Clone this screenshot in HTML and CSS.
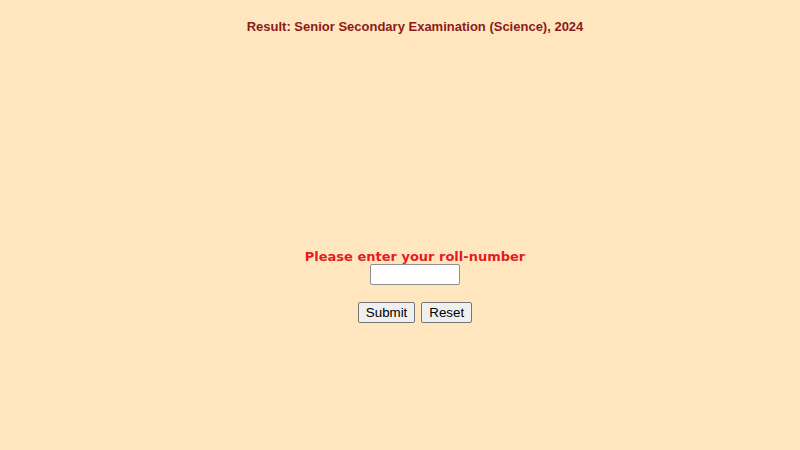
FILE: index.html
```
<!DOCTYPE html>
<html>
<head>
<meta charset="utf-8">
<link rel="stylesheet" href="styles.css">
</head>
<body>
<div class="page">
  <h1 class="title">Result: Senior Secondary Examination (Science), 2024</h1>
  <form class="form">
    <label class="prompt" for="roll">Please enter your roll-number</label>
    <input class="roll" id="roll" type="text">
    <div class="buttons">
      <button type="button" class="btn">Submit</button>
      <button type="button" class="btn">Reset</button>
    </div>
  </form>
</div>
</body>
</html>
```
FILE: styles.css
```
html, body {
  margin: 0;
  padding: 0;
  background: #ffe6bf;
}
.page {
  width: 830px;
  display: flex;
  flex-direction: column;
  align-items: center;
}
.title {
  margin: 19px 0 0 0;
  font-family: "Liberation Sans", Arial, sans-serif;
  font-size: 13px;
  font-weight: bold;
  color: #8b1a1a;
  line-height: 15px;
}
.form {
  margin-top: 215px;
  display: flex;
  flex-direction: column;
  align-items: center;
}
.prompt {
  font-family: "DejaVu Sans", Verdana, sans-serif;
  font-size: 13px;
  font-weight: bold;
  color: #e41c1f;
  line-height: 15px;
}
.roll {
  box-sizing: border-box;
  width: 90px;
  height: 21px;
  margin: 0;
  border: 1px solid #8f8f8f;
  border-radius: 2px;
  background: #fff;
}
.buttons {
  margin-top: 17px;
  display: flex;
  gap: 6px;
}
.btn {
  box-sizing: border-box;
  height: 21px;
  padding: 0 7px;
  font-family: "Liberation Sans", Arial, sans-serif;
  font-size: 13.33px;
  color: #000;
  background: #efefef;
  border: 1px solid #767676;
  border-radius: 2px;
}
```
